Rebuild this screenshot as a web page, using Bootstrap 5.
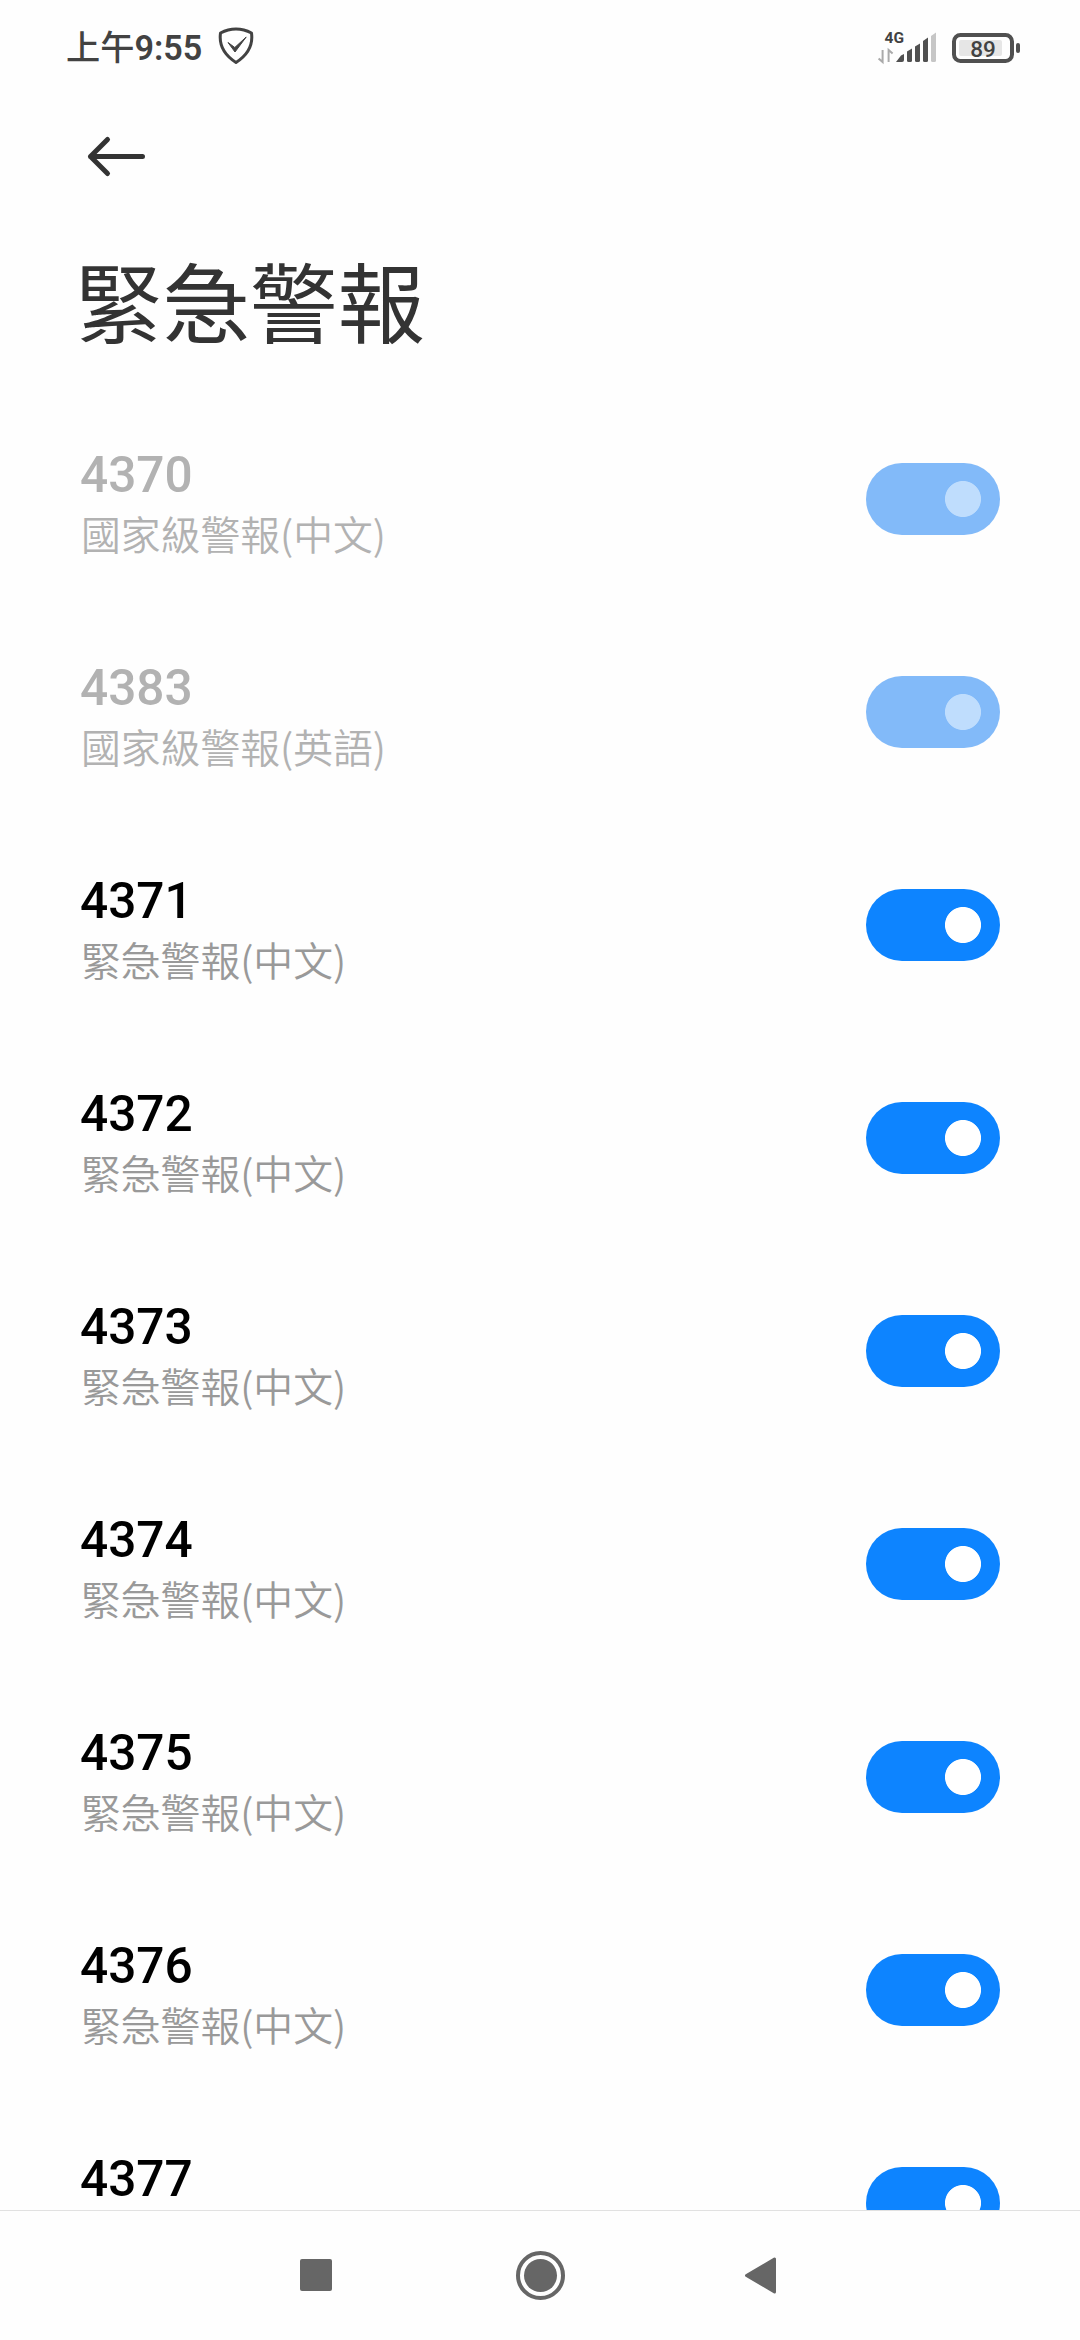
<!DOCTYPE html>
<html lang="zh-Hant">
<head>
<meta charset="utf-8">
<meta name="viewport" content="width=device-width, initial-scale=1">
<title>緊急警報</title>
<link href="https://cdn.jsdelivr.net/npm/bootstrap@5.3.0/dist/css/bootstrap.min.css" rel="stylesheet">
<style>
  body { background: #fefefe; font-family: Roboto, "Noto Sans CJK TC", sans-serif; color: #000; }
  .phone { width: 1080px; height: 2340px; }
  .status-bar { height: 92px; padding: 0 58px 0 66px; color: #424242; }
  .clock { font-size: 34.2px; font-weight: 600; line-height: 44px; padding-top: 3px; white-space: nowrap; }
  .clock-cjk { font-weight: 500; }
  .shield { margin-left: 16px; }
  .app-header { height: 128px; padding: 0 84px; }
  .page-title { height: 172px; margin: 0; padding-left: 75px; font-size: 87.5px; line-height: 174px; font-weight: 400; color: #333; }
  .alert-row { height: 213px; padding: 0 80px; flex: none; }
  .row-text { padding-top: 14px; }
  .row-title { font-size: 49.6px; line-height: 58px; font-weight: 500; }
  .row-note { font-family: "Noto Sans CJK TC", sans-serif; font-size: 39.8px; line-height: 57px; font-weight: 350; color: #999; padding: 0 0 5px 1px; }
  .is-locked .row-title, .is-locked .row-note { color: #b2b2b2; }
  .alert-row .form-check-input { width: 134px; height: 72px; margin: 0; border: 0; border-radius: 36px; opacity: 1; }
  .alert-row .form-check-input:checked { background: #0d84ff radial-gradient(circle at 97px 36px, #fff 17.6px, transparent 18.4px) 0 0 / 100% 100% no-repeat; }
  .alert-row.is-locked .form-check-input:checked { background: #82baf9 radial-gradient(circle at 97px 36px, #bfddfd 17.6px, transparent 18.4px) 0 0 / 100% 100% no-repeat; opacity: 1; }
  .nav-keys { height: 130px; border-top: 1px solid #e1e1e1; flex: none; }
  svg text { font-family: Roboto, sans-serif; }
</style>
</head>
<body>
<div class="phone d-flex flex-column overflow-hidden">
  <header class="status-bar d-flex align-items-center justify-content-between flex-shrink-0">
    <div class="d-flex align-items-center">
      <span class="clock"><span class="clock-cjk">上午</span>9:55</span>
      <svg class="shield" width="36" height="38" viewBox="0 0 36 38" fill="none">
        <path d="M18 2 Q10 2 2.5 6 Q0 24 18 35.5 Q36 24 33.5 6 Q26 2 18 2Z" stroke="#424242" stroke-width="3" stroke-linejoin="round"/>
        <path d="M10 15.500 16.800 20.500 28.200 10 17 25Z" fill="#424242" stroke="#424242" stroke-width="1"/>
      </svg>
    </div>
    <svg width="146" height="40" viewBox="876 26 146 40">
      <text x="884.5" y="43" font-size="15.5" font-weight="700" fill="#424242">4G</text>
      <path d="M882.600 50v12l-4-3.600M888.600 62V50l4 3.600" fill="none" stroke="#aaa" stroke-width="2"/>
      <g fill="#505050">
        <path d="M896 62 901 55.600 904 54V60q0 2-2 2Z"/>
        <path d="M907 51.500 912 48.500V60.500q0 1.500-1.500 1.500H908.500Q907 62 907 60.500Z"/>
        <path d="M915 46.500 920 43.500V60.500q0 1.500-1.500 1.500H916.500Q915 62 915 60.500Z"/>
        <path d="M923 41 928 37.500V60.500q0 1.500-1.500 1.500H924.500Q923 62 923 60.500Z"/>
      </g>
      <path d="M931 36 936 32.500V60.500q0 1.500-1.500 1.500H932.500Q931 62 931 60.500Z" fill="#c6c6c6"/>
      <rect x="954" y="35" width="58" height="26" rx="6.500" fill="none" stroke="#505050" stroke-width="4"/>
      <rect x="959" y="40" width="43" height="16" rx="2" fill="#e6e6e6"/>
      <rect x="1016" y="43" width="4" height="10" rx="2" fill="#505050"/>
      <text x="983" y="56.500" font-size="22.500" font-weight="500" fill="#424242" text-anchor="middle">89</text>
    </svg>
  </header>

  <div class="app-header flex-shrink-0 d-flex align-items-center">
    <svg width="64" height="44" viewBox="84 134 64 44" fill="none" stroke="#333" stroke-width="5" stroke-linecap="round" stroke-linejoin="round">
      <path d="M107.500 139.500 90.500 156.500 107.500 173.500M90.500 156.500H142.500"/>
    </svg>
  </div>

  <h1 class="page-title flex-shrink-0">緊急警報</h1>

  <main class="flex-grow-1 overflow-hidden d-flex flex-column" style="min-height:0">
    <div class="alert-row is-locked d-flex align-items-center justify-content-between"><div class="row-text"><div class="row-title">4370</div><div class="row-note">國家級警報(中文)</div></div><input class="form-check-input" type="checkbox" role="switch" aria-label="4370" checked disabled></div>
    <div class="alert-row is-locked d-flex align-items-center justify-content-between"><div class="row-text"><div class="row-title">4383</div><div class="row-note">國家級警報(英語)</div></div><input class="form-check-input" type="checkbox" role="switch" aria-label="4383" checked disabled></div>
    <div class="alert-row d-flex align-items-center justify-content-between"><div class="row-text"><div class="row-title">4371</div><div class="row-note">緊急警報(中文)</div></div><input class="form-check-input" type="checkbox" role="switch" aria-label="4371" checked></div>
    <div class="alert-row d-flex align-items-center justify-content-between"><div class="row-text"><div class="row-title">4372</div><div class="row-note">緊急警報(中文)</div></div><input class="form-check-input" type="checkbox" role="switch" aria-label="4372" checked></div>
    <div class="alert-row d-flex align-items-center justify-content-between"><div class="row-text"><div class="row-title">4373</div><div class="row-note">緊急警報(中文)</div></div><input class="form-check-input" type="checkbox" role="switch" aria-label="4373" checked></div>
    <div class="alert-row d-flex align-items-center justify-content-between"><div class="row-text"><div class="row-title">4374</div><div class="row-note">緊急警報(中文)</div></div><input class="form-check-input" type="checkbox" role="switch" aria-label="4374" checked></div>
    <div class="alert-row d-flex align-items-center justify-content-between"><div class="row-text"><div class="row-title">4375</div><div class="row-note">緊急警報(中文)</div></div><input class="form-check-input" type="checkbox" role="switch" aria-label="4375" checked></div>
    <div class="alert-row d-flex align-items-center justify-content-between"><div class="row-text"><div class="row-title">4376</div><div class="row-note">緊急警報(中文)</div></div><input class="form-check-input" type="checkbox" role="switch" aria-label="4376" checked></div>
    <div class="alert-row d-flex align-items-center justify-content-between"><div class="row-text"><div class="row-title">4377</div><div class="row-note">&nbsp;</div></div><input class="form-check-input" type="checkbox" role="switch" aria-label="4377" checked></div>
  </main>

  <nav class="nav-keys">
    <svg class="d-block" width="1080" height="129" viewBox="0 2211 1080 129" fill="#666">
      <rect x="300" y="2259" width="32" height="32" rx="2"/>
      <circle cx="540.500" cy="2275.500" r="22.500" fill="none" stroke="#666" stroke-width="4"/>
      <circle cx="540.500" cy="2275.500" r="16.500"/>
      <path d="M746.500 2275.500 774.500 2259V2292Z" stroke="#666" stroke-width="3" stroke-linejoin="round"/>
    </svg>
  </nav>
</div>
<script src="https://cdn.jsdelivr.net/npm/bootstrap@5.3.0/dist/js/bootstrap.bundle.min.js"></script>
</body>
</html>
